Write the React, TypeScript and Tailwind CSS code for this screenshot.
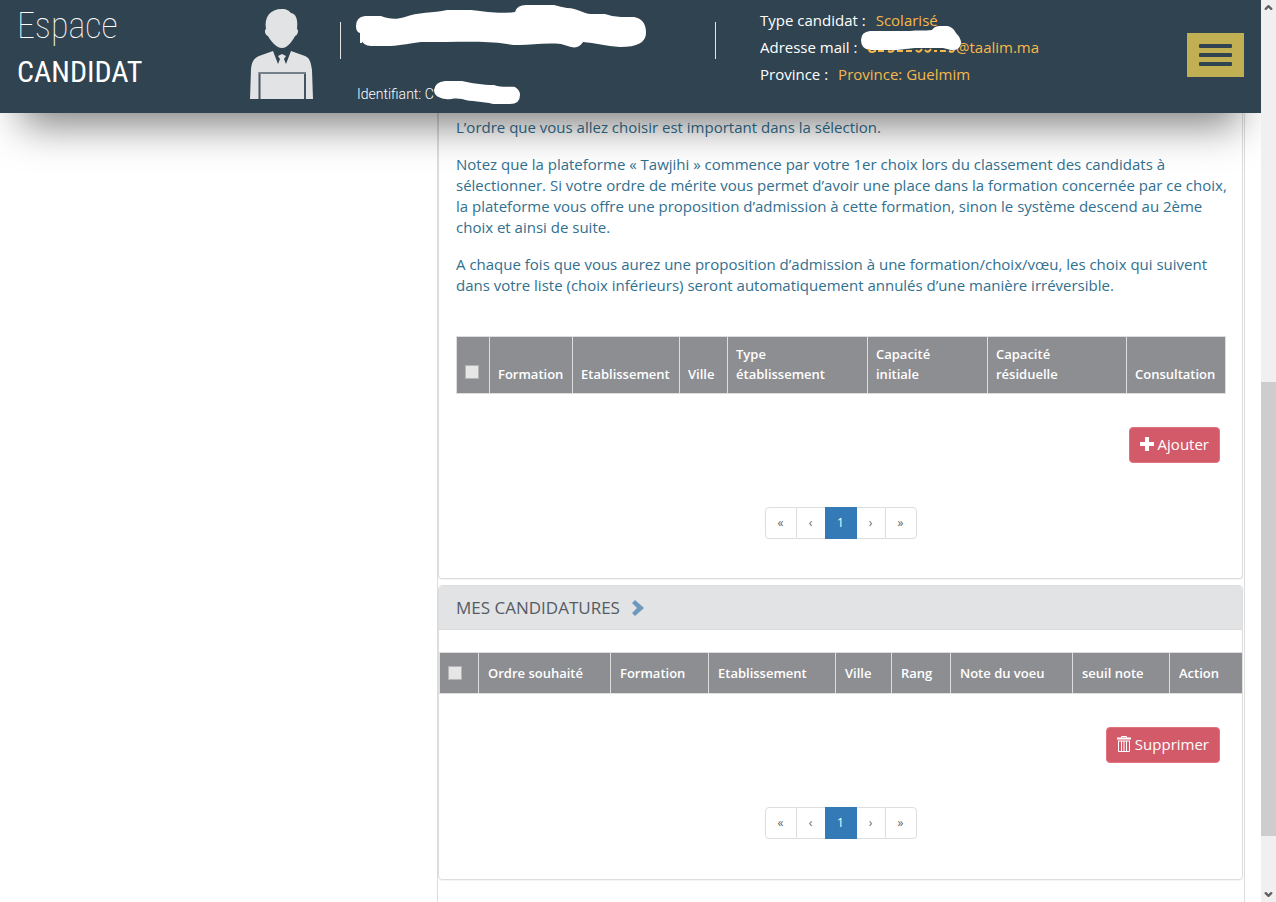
import { ChevronDown, ChevronUp } from "lucide-react"
import { clsx } from "clsx"

const choiceColumns = [
    { label: "Formation", width: "w-[83px]" },
    { label: "Etablissement", width: "w-[107px]" },
    { label: "Ville", width: "w-[48px]" },
    { label: "Type établissement", width: "w-[140px]", wrap: true },
    { label: "Capacité initiale", width: "w-[120px]", wrap: true },
    { label: "Capacité résiduelle", width: "w-[139px]", wrap: true },
    { label: "Consultation", width: "w-[99px]" },
]

const applicationColumns = [
    { label: "Ordre souhaité", width: "w-[132px]" },
    { label: "Formation", width: "w-[98px]" },
    { label: "Etablissement", width: "w-[127px]" },
    { label: "Ville", width: "w-[56px]" },
    { label: "Rang", width: "w-[59px]" },
    { label: "Note du voeu", width: "w-[122px]" },
    { label: "seuil note", width: "w-[97px]" },
    { label: "Action", width: "w-[73px]" },
]

export default function App() {
    return (
        <div className="flex h-screen overflow-hidden bg-white font-['Open_Sans','Noto_Sans',sans-serif] text-[15px]">
            <div className="flex min-w-0 flex-1 flex-col overflow-hidden">
                <Header />
                <main className="ml-[437px] mr-4 flex-1 border-x border-[#dddddd] pr-px">
                    <ChoicesPanel />
                    <ApplicationsPanel />
                </main>
            </div>
            <ScrollTrack />
        </div>
    )
}

function Header() {
    return (
        <header className="relative z-10 flex h-[113px] shrink-0 bg-[#304350] text-white shadow-[0_34px_40px_-22px_rgba(0,0,0,0.5)]">
            <div className="w-[250px] pl-[17px] pt-1 font-['Roboto_Condensed',Roboto,sans-serif]">
                <div className="text-[36px] font-thin leading-[44px]">Espace</div>
                <div className="text-[30px] leading-[48px]">CANDIDAT</div>
            </div>
            <Avatar />
            <div className="ml-[26px] mt-[22px] h-[37px] w-px bg-[#e2e4e6]" />
            <div className="relative w-[374px] pl-4 pt-[84px] font-[Roboto,sans-serif] text-[14px] font-light leading-5">
                Identifiant: C
                <NameMask />
            </div>
            <div className="mt-[22px] h-[37px] w-px bg-[#e2e4e6]" />
            <dl className="ml-11 mt-[7px] leading-[27px]">
                <div className="flex gap-[10px]">
                    <dt>Type candidat :</dt>
                    <dd className="text-[#f7b84b]">Scolarisé</dd>
                </div>
                <div className="relative flex">
                    <dt className="w-[196px]">Adresse mail :</dt>
                    <dd className="text-[#f7b84b]">@taalim.ma</dd>
                    <MailMask />
                </div>
                <div className="flex gap-[10px]">
                    <dt>Province :</dt>
                    <dd className="text-[#f7b84b]">Province: Guelmim</dd>
                </div>
            </dl>
            <button
                type="button"
                aria-label="Menu"
                className="ml-auto mr-[17px] mt-[33px] flex h-11 w-[57px] flex-col items-center justify-center gap-[5px] bg-[#c1b053]"
            >
                <span className="h-1 w-[33px] rounded-[1px] bg-[#304350]" />
                <span className="h-1 w-[33px] rounded-[1px] bg-[#304350]" />
                <span className="h-1 w-[33px] rounded-[1px] bg-[#304350]" />
            </button>
        </header>
    )
}

function ChoicesPanel() {
    return (
        <section className="rounded-b border-x border-b border-[#dddddd] px-[17px] pb-[39px] pt-1 shadow-[0_1px_1px_rgba(0,0,0,0.05)]">
            <div className="-mr-3 flex flex-col gap-4 leading-[21px] text-[#31708f]">
                <p>L’ordre que vous allez choisir est important dans la sélection.</p>
                <p>
                    Notez que la plateforme « Tawjihi » commence par votre 1er choix lors du classement des candidats à
                    sélectionner. Si votre ordre de mérite vous permet d’avoir une place dans la formation concernée par ce choix,
                    la plateforme vous offre une proposition d’admission à cette formation, sinon le système descend au 2ème
                    choix et ainsi de suite.
                </p>
                <p>
                    A chaque fois que vous aurez une proposition d’admission à une formation/choix/vœu, les choix qui suivent
                    dans votre liste (choix inférieurs) seront automatiquement annulés d’une manière irréversible.
                </p>
            </div>
            <DataTable
                className="mt-10"
                selectLabel="Sélectionner tous les choix"
                checkWidth="w-[33px]"
                columns={choiceColumns}
            />
            <div className="mt-[33px] flex justify-end pr-[5px]">
                <ActionButton>
                    <PlusIcon />
                    Ajouter
                </ActionButton>
            </div>
            <Pager />
        </section>
    )
}

function ApplicationsPanel() {
    return (
        <section className="mt-1.5 rounded border border-[#dddddd] pb-10 shadow-[0_1px_1px_rgba(0,0,0,0.05)]">
            <h2 className="flex h-11 items-center gap-3 rounded-t border-b border-[#dddddd] bg-[#e2e3e5] px-[17px] text-[17px] text-[#555c63]">
                MES CANDIDATURES
                <svg viewBox="0 0 12 16" className="h-4 w-3 fill-[#6f98bd]" aria-hidden="true">
                    <path d="M3 0 12 8 3 16 0 13 5 8 0 3z" />
                </svg>
            </h2>
            <DataTable
                className="mt-[22px]"
                selectLabel="Sélectionner toutes les candidatures"
                checkWidth="w-[39px]"
                columns={applicationColumns}
                roomy
            />
            <div className="mt-[33px] flex justify-end pr-[22px]">
                <ActionButton>
                    <TrashIcon />
                    Supprimer
                </ActionButton>
            </div>
            <Pager />
        </section>
    )
}

type Column = { label: string; width: string; wrap?: boolean }

type DataTableProps = {
    className: string
    selectLabel: string
    checkWidth: string
    columns: Column[]
    roomy?: boolean
}

function DataTable({ className, selectLabel, checkWidth, columns, roomy }: DataTableProps) {
    return (
        <table className={clsx("w-full table-fixed border-collapse bg-[#8d8e92] text-left text-[13px] leading-5 text-white", className)}>
            <thead>
                <tr>
                    <th className={clsx("border border-[#dddddd] px-2 align-bottom", checkWidth, roomy ? "py-[10px]" : "py-2")}>
                        <label className={clsx("flex h-5", roomy ? "items-center" : "items-start")}>
                            <input
                                type="checkbox"
                                aria-label={selectLabel}
                                className="size-[14px] appearance-none border border-[#b5b5b5] bg-[#e6e6e6]"
                            />
                        </label>
                    </th>
                    {columns.map((column) => (
                        <th
                            key={column.label}
                            className={clsx(
                                "border border-[#dddddd] align-bottom font-semibold",
                                column.width,
                                roomy ? "px-[9px] py-[10px]" : "px-2 pb-[9px] pt-[7px]",
                                !column.wrap && "whitespace-nowrap",
                            )}
                        >
                            {column.wrap
                                ? column.label.split(" ").map((word) => (
                                      <span key={word} className="block">
                                          {word}
                                      </span>
                                  ))
                                : column.label}
                        </th>
                    ))}
                </tr>
            </thead>
        </table>
    )
}

function ActionButton({ children }) {
    return (
        <button
            type="button"
            className="flex h-9 items-center gap-1 rounded border border-[#e0737c] bg-[#d35b69] px-[10px] pb-0.5 text-[15px] text-white"
        >
            {children}
        </button>
    )
}

function Pager() {
    const side = "flex items-center justify-center border-[#dddddd] text-[#666666]"
    return (
        <nav aria-label="Pagination" className="mt-11 flex justify-center text-[12px]">
            <div className="flex h-8">
                <a href="#first" className={clsx(side, "w-8 rounded-l border")}>«</a>
                <a href="#prev" className={clsx(side, "w-7 border-y")}>‹</a>
                <a href="#1" aria-current="page" className="flex w-8 items-center justify-center bg-[#337ab7] text-white">1</a>
                <a href="#next" className={clsx(side, "w-7 border-y")}>›</a>
                <a href="#last" className={clsx(side, "w-8 rounded-r border")}>»</a>
            </div>
        </nav>
    )
}

function ScrollTrack() {
    return (
        <div className="flex w-[15px] shrink-0 flex-col items-center bg-[#f0f0f0] text-[#606060]" aria-hidden="true">
            <ChevronUp className="mt-[2px] size-[11px]" strokeWidth={5} />
            <div className="grow-[369]" />
            <div className="w-full grow-[454] bg-[#cdcdcd]" />
            <div className="grow-[53]" />
            <ChevronDown className="mb-[2px] size-[11px]" strokeWidth={5} />
        </div>
    )
}

function Avatar() {
    return (
        <svg viewBox="0 0 64 90" className="mt-[9px] h-[90px] w-16 shrink-0" aria-hidden="true">
            <g fill="#e2e3e5">
                <path d="M32 0c5 0 7 2 9 4 5 1 7 6 6 16 2 1 1 6-2 7-2 4-7 12-13 12S20 31 18 27c-3-1-4-6-2-7C14 8 20 0 32 0z" />
                <path d="M23 42 28 55 30 50 28 47 32 45 36 47 34 50 36 55 41 42 55 47C60 49 61 54 62 61L63 90H0L1 60C2 51 5 49 9 47z" />
            </g>
            <path d="M9.500 90V64H55V90" fill="none" stroke="#435562" strokeWidth="2" />
            <path d="M9 64H56" stroke="#74818c" strokeWidth="2" />
        </svg>
    )
}

function NameMask() {
    return (
        <svg viewBox="0 0 374 113" className="absolute left-0 top-0 h-[113px] w-[374px] fill-white" aria-hidden="true">
            <path d="M19 33h2v10h-2z" />
            <path d="M24 16H40C48 19 55 20 64 17C76 12 93 13 106 10H130C148 12 158 14 174 12Q176 5 185 5H213Q220 7 226 8C237 8 242 14 250 14H264Q272 17 280 17H293Q305 19 305 33Q305 47 279 47C265 46 254 43 242 42Q238 49 230 47L220 44C198 42 183 47 166 44C146 41 124 42 105 42H80C64 44 57 46 45 46H30Q22 46 20 39L19 33Q15 32 15 26Q15 17 24 16z" />
            <path d="M104 81H121C130 83 142 85 153 85C161 88 171 86 174 87Q179 90 179 95Q179 104 169 104H152C142 101 130 102 121 99C112 97 107 101 100 98Q93 96 93 90Q94 82 104 81z" />
        </svg>
    )
}

function MailMask() {
    return (
        <svg viewBox="0 0 110 36" className="absolute left-[97px] top-[-8px] h-9 w-[110px]" aria-hidden="true">
            <path
                d="M13 5H53C60 4 68 5 75 4Q78-1 87 0Q95-1 99 7Q104 12 104 17Q103 25 94 24L86 22H58L40 24H13Q4 23 4 14Q4 6 13 5z"
                fill="#ffffff"
            />
            <path
                d="M12 23q0 3 3 3 3 0 3-2v2M21 25h6M31 25q4 2 6-1M40 25h6M49 25h6M59 24q3 4 6-1M68 24q3 4 6-1M77 25h3M83 25h6M92 25q4 2 5-1"
                fill="none"
                stroke="#f7b84b"
                strokeWidth="2"
            />
        </svg>
    )
}

function PlusIcon() {
    return (
        <svg viewBox="0 0 14 14" className="size-[14px] fill-white" aria-hidden="true">
            <path d="M5 0h4v5h5v4H9v5H5V9H0V5h5z" />
        </svg>
    )
}

function TrashIcon() {
    return (
        <svg viewBox="0 0 14 16" className="h-4 w-[14px]" fill="none" stroke="#ffffff" aria-hidden="true">
            <path d="M4.500 2V.5h5V2" />
            <path d="M0 2.500h14" strokeWidth="2" />
            <path d="M1.500 5v10.500h11V5M4.500 5v10M7 5v10M9.500 5v10M1 5h12" />
        </svg>
    )
}
